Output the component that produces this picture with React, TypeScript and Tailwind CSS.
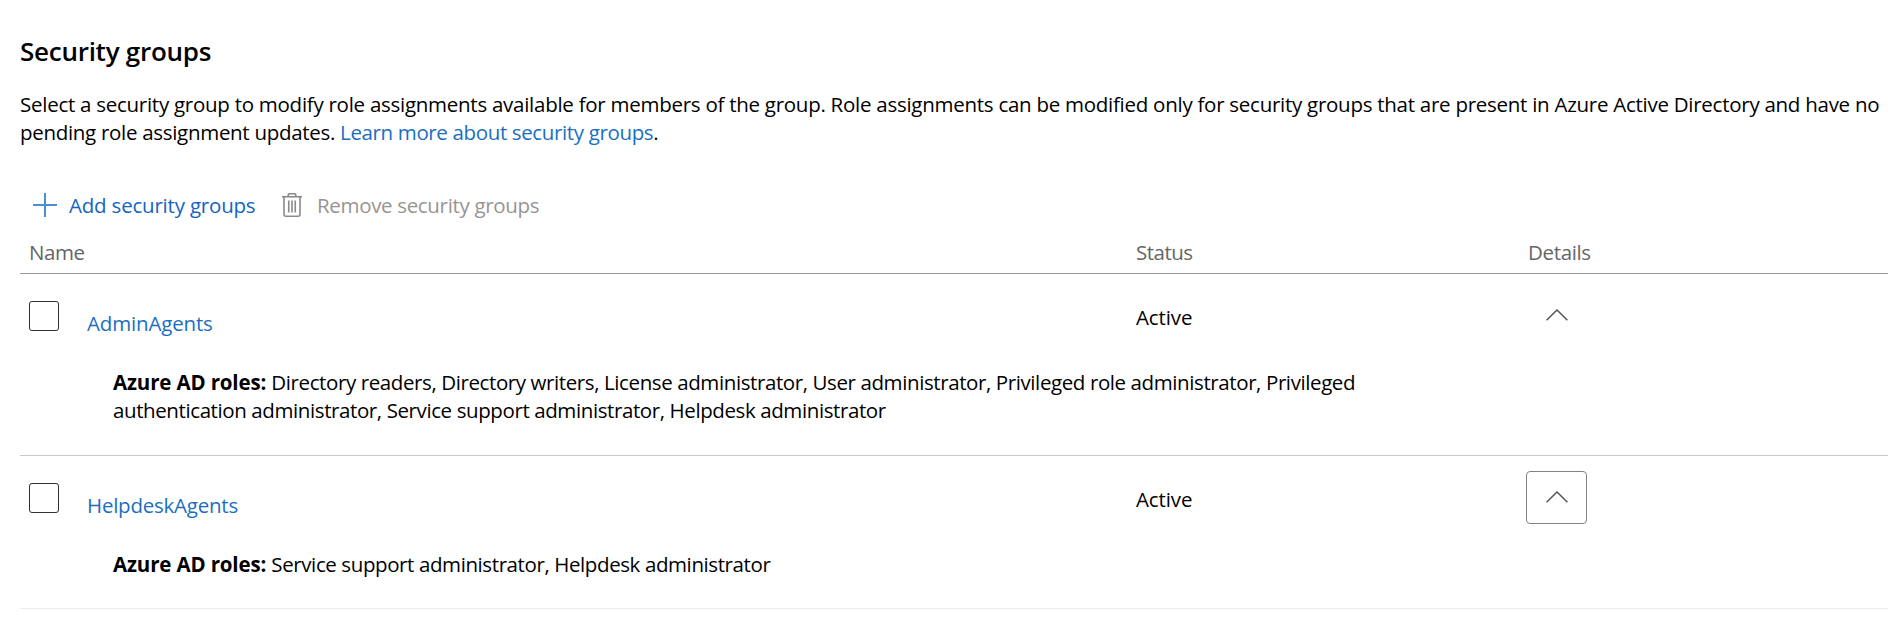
import React from "react";

type Role = { text: string; className: string };

type Group = {
  name: string;
  nameClass: string;
  status: string;
  roles: Role[];
  focused: boolean;
  rowClass: string;
};

const groups: Group[] = [
  {
    name: "AdminAgents",
    nameClass: "tracking-[-0.17px]",
    status: "Active",
    roles: [
      {
        text: "Directory readers, Directory writers, License administrator, User administrator, Privileged role administrator, Privileged",
        className: "tracking-[-0.4px]",
      },
      {
        text: "authentication administrator, Service support administrator, Helpdesk administrator",
        className: "tracking-[-0.4px]",
      },
    ],
    focused: false,
    rowClass: "h-[182px] border-[#cacaca]",
  },
  {
    name: "HelpdeskAgents",
    nameClass: "tracking-[-0.23px]",
    status: "Active",
    roles: [
      {
        text: "Service support administrator, Helpdesk administrator",
        className: "tracking-[-0.4px]",
      },
    ],
    focused: true,
    rowClass: "h-[153px] border-[#ededed]",
  },
];

function PlusIcon() {
  return (
    <svg className="h-6 w-6 shrink-0" viewBox="0 0 24 24" fill="none" stroke="#4a90d0" strokeWidth="2">
      <path d="M12 0v24M0 12h24" />
    </svg>
  );
}

function TrashIcon() {
  return (
    <svg className="h-6 w-5 shrink-0" viewBox="0 0 20 24" fill="none" stroke="#8a8a8a" strokeWidth="1.6">
      <path d="M0 3.75h20" />
      <path d="M6.25 3.5V2q0-1.25 1.25-1.25h5q1.25 0 1.25 1.25v1.5" />
      <path d="M2 4v17.25q0 2 2 2h12q2 0 2-2V4" />
      <path d="M6.75 7.5v12M10 7.5v12M13.25 7.5v12" />
    </svg>
  );
}

function ChevronUpIcon() {
  return (
    <svg className="h-3 w-[22px]" viewBox="0 0 22 12" fill="none" stroke="#555555" strokeWidth="1.5">
      <path d="M0.6 11.2 11 1l10.4 10.2" />
    </svg>
  );
}

function GroupRow({ group }: { group: Group }) {
  return (
    <div className={`flex flex-col border-b ${group.rowClass}`}>
      <div className="flex h-[94px] items-start">
        <div className="flex w-[1115px] items-start pl-[9px]">
          <button
            role="checkbox"
            aria-checked="false"
            className="mt-[27px] h-[30px] w-[30px] shrink-0 rounded-[3px] border border-[#323130]"
          />
          <a className={`mt-[35px] ml-7 text-[#1b6ec2] ${group.nameClass}`}>{group.name}</a>
        </div>
        <div className="mt-[29px] w-[391px] pl-px tracking-[-0.1px]">{group.status}</div>
        <button
          className={`mt-[15px] flex h-[53px] w-[61px] items-center justify-center rounded-[4px] border pb-0.5 ${
            group.focused ? "border-[#838383]" : "border-transparent"
          }`}
        >
          <ChevronUpIcon />
        </button>
      </div>
      <div className="pl-[93px] whitespace-nowrap">
        {group.roles.map((line, i) => (
          <div key={i} className={line.className}>
            {i === 0 && <b className="font-bold tracking-[-0.15px]">Azure AD roles: </b>}
            {line.text}
          </div>
        ))}
      </div>
    </div>
  );
}

export default function App() {
  return (
    <main className="h-[625px] overflow-hidden bg-white pt-[33px] pl-5 font-['Open_Sans','Noto_Sans',sans-serif] text-[20.5px] leading-7 text-black">
      <h1 className="text-[26px] leading-9 font-semibold tracking-[-0.26px]">Security groups</h1>
      <p className="mt-[21px] whitespace-nowrap">
        <span className="tracking-[-0.265px]">
          Select a security group to modify role assignments available for members of the group. Role assignments can
          be modified only for security groups that are present in Azure Active Directory and have no
        </span>
        <br />
        <span className="tracking-[-0.3px]">pending role assignment updates. </span>
        <a className="tracking-[-0.36px] text-[#1b6ec2]">Learn more about security groups</a>.
      </p>

      <div className="mt-[45px] flex h-7 items-center whitespace-nowrap">
        <div className="flex w-[249px] items-center pl-[13px]">
          <PlusIcon />
          <a className="ml-3 tracking-[-0.2px] text-[#1464c0]">Add security groups</a>
        </div>
        <div className="flex items-center pl-[13px]">
          <TrashIcon />
          <span className="ml-[15px] tracking-[-0.33px] text-[#979593]">Remove security groups</span>
        </div>
      </div>

      <div className="mt-[19px] flex h-9 border-b border-[#9a9a9a] text-[#666666]">
        <div className="w-[1116px] pl-[9px] tracking-[-0.4px]">Name</div>
        <div className="w-[392px] tracking-[-0.5px]">Status</div>
        <div className="tracking-[-0.35px]">Details</div>
      </div>

      {groups.map((group) => (
        <GroupRow key={group.name} group={group} />
      ))}
    </main>
  );
}
